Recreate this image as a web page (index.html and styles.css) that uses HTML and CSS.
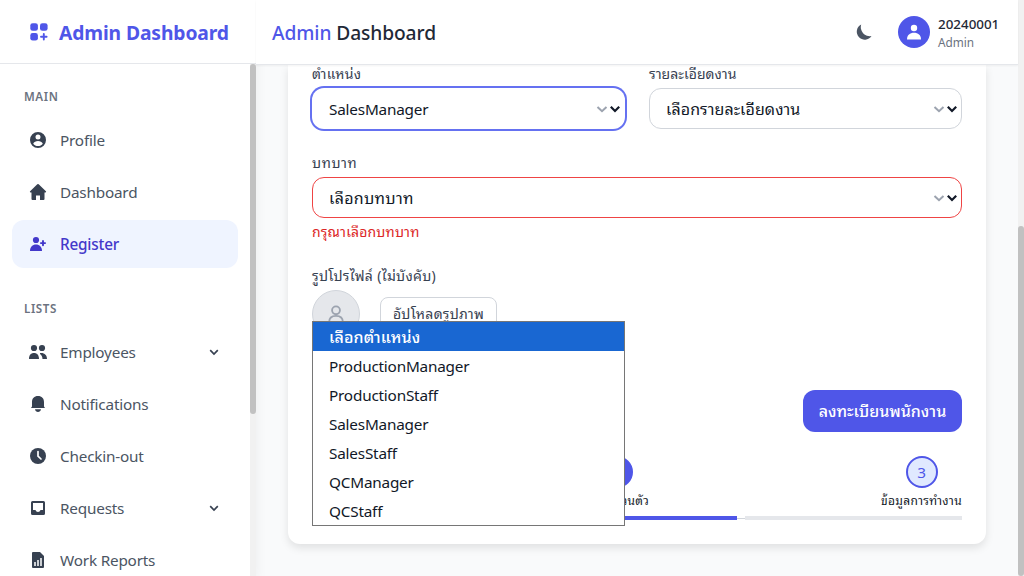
FILE: index.html
```html
<!DOCTYPE html>
<html lang="th">
<head>
<meta charset="utf-8">
<title>Admin Dashboard</title>
<link rel="stylesheet" href="styles.css">
</head>
<body>
<div class="app">
  <aside class="sidebar">
    <div class="brand">
      <svg class="brand-icon" viewBox="0 0 20 20"><rect x="1.300" y="1.200" width="7.600" height="7.600" rx="2.400"/><rect x="11" y="1.200" width="7.600" height="7.600" rx="2.400"/><rect x="1.300" y="11" width="7.600" height="7.600" rx="2.400"/><path d="M14.800 12v5.600M12 14.800h5.600" stroke="currentColor" stroke-width="1.900" stroke-linecap="round"/></svg>
      <span class="brand-name">Admin Dashboard</span>
    </div>
    <div class="side-body">
      <nav class="nav">
        <h3 class="nav-title">MAIN</h3>
        <a class="nav-item"><svg class="icon" viewBox="0 0 20 20"><path fill-rule="evenodd" d="M10 2a8 8 0 1 0 0 16 8 8 0 0 0 0-16zm0 2.600a2.500 2.500 0 1 1 0 5 2.500 2.500 0 0 1 0-5zM5.200 13.700C6 11.900 7.800 11 10 11s4 .9 4.800 2.700C13.600 15.200 12 16 10 16s-3.600-.8-4.800-2.300z"/></svg><span>Profile</span></a>
        <a class="nav-item"><svg class="icon" viewBox="0 0 20 20"><path d="M9.300 2.300a1 1 0 0 1 1.400 0l7.200 7c.5.500.2 1.200-.5 1.200H16.500V17a1 1 0 0 1-1 1H12v-4.500H8V18H4.500a1 1 0 0 1-1-1v-6.500H2.600c-.7 0-1-.7-.5-1.200z"/></svg><span>Dashboard</span></a>
        <a class="nav-item active"><svg class="icon" viewBox="0 0 20 20"><circle cx="8" cy="6" r="3.100"/><path d="M2 17c0-4 2.500-6.500 6-6.500s6 2.500 6 6.500z"/><path d="M15 7v4.200M12.900 9.100h4.200" stroke="currentColor" stroke-width="1.900" stroke-linecap="round"/></svg><span>Register</span></a>
        <h3 class="nav-title second">LISTS</h3>
        <a class="nav-item"><svg class="icon" viewBox="0 0 20 20"><circle cx="6" cy="6" r="3.100"/><circle cx="14" cy="6" r="3.100"/><path d="M1 17c0-4 2-6 5-6s5 2 5 6zM12 11c4.500-.5 7 2 7 6h-4.500c0-2-.8-4-2.500-5z"/></svg><span>Employees</span><svg class="caret" viewBox="0 0 12 12"><path d="M2.200 4.200 6 8l3.800-3.800"/></svg></a>
        <a class="nav-item"><svg class="icon" viewBox="0 0 20 20"><path d="M10 2c3.800 0 6 2.500 6 6v4.500l1 1.500H3l1-1.500V8c0-3.500 2.200-6 6-6zM7 15.300h6c-.3 1.700-1.500 2.700-3 2.700s-2.700-1-3-2.700z"/></svg><span>Notifications</span></a>
        <a class="nav-item"><svg class="icon" viewBox="0 0 20 20"><circle cx="10" cy="10" r="8"/><path d="M10 5.500v4.700l3 2.800" fill="none" stroke="#fff" stroke-width="1.700" stroke-linecap="round"/></svg><span>Checkin-out</span></a>
        <a class="nav-item"><svg class="icon" viewBox="0 0 20 20"><path fill-rule="evenodd" d="M4.500 3h11A1.500 1.500 0 0 1 17 4.500v11a1.500 1.500 0 0 1-1.500 1.500h-11A1.500 1.500 0 0 1 3 15.500v-11A1.500 1.500 0 0 1 4.500 3zM5 5v7h2.500c.4 1.300 1.300 2 2.500 2s2.100-.7 2.500-2H15V5z"/></svg><span>Requests</span><svg class="caret" viewBox="0 0 12 12"><path d="M2.200 4.200 6 8l3.800-3.800"/></svg></a>
        <a class="nav-item"><svg class="icon" viewBox="0 0 20 20"><path d="M5 2h7l4 4v11a1 1 0 0 1-1 1H5a1 1 0 0 1-1-1V3a1 1 0 0 1 1-1z"/><path d="M7 12v4M10 10v6M13 8v8" stroke="#fff" stroke-width="1.500"/></svg><span>Work Reports</span></a>
      </nav>
      <div class="side-scroll"><div class="side-thumb"></div></div>
    </div>
  </aside>

  <div class="main">
    <header class="topbar">
      <h1 class="title"><span class="accent">Admin</span> Dashboard</h1>
      <div class="account">
        <svg class="moon" viewBox="0 0 20 20"><path d="M7.200 2.500a8 8 0 1 0 10.300 11.500A9 9 0 0 1 7.200 2.500z"/></svg>
        <div class="user-badge"><svg viewBox="0 0 20 20"><circle cx="10" cy="6" r="3.200"/><path d="M3 17.500C3 13 6 10.800 10 10.800s7 2.200 7 6.700z"/></svg></div>
        <div class="user"><div class="user-id">20240001</div><div class="user-role">Admin</div></div>
      </div>
    </header>
    <main class="content">
      <section class="card">
        <div class="row">
          <div class="field">
            <label class="label l-pos">ตำแหน่ง</label>
            <div class="select focused"><span>SalesManager</span><svg class="chev" viewBox="0 0 12 12"><path d="M1.500 4 6 8.200 10.500 4"/></svg><svg class="chev dark" viewBox="0 0 12 12"><path d="M1.800 3.800 6 8l4.200-4.200"/></svg></div>
          </div>
          <div class="field">
            <label class="label l-detail">รายละเอียดงาน</label>
            <div class="select"><span class="t-detail">เลือกรายละเอียดงาน</span><svg class="chev" viewBox="0 0 12 12"><path d="M1.500 4 6 8.200 10.500 4"/></svg><svg class="chev dark" viewBox="0 0 12 12"><path d="M1.800 3.800 6 8l4.200-4.200"/></svg></div>
          </div>
        </div>
        <div class="field role">
          <label class="label l-role">บทบาท</label>
          <div class="select invalid"><span class="t-role">เลือกบทบาท</span><svg class="chev" viewBox="0 0 12 12"><path d="M1.500 4 6 8.200 10.500 4"/></svg><svg class="chev dark" viewBox="0 0 12 12"><path d="M1.800 3.800 6 8l4.200-4.200"/></svg></div>
          <p class="error">กรุณาเลือกบทบาท</p>
        </div>
        <div class="field photo">
          <label class="label l-photo">รูปโปรไฟล์ (ไม่บังคับ)</label>
          <div class="upload">
            <div class="photo-circle"><svg viewBox="0 0 24 24"><circle cx="12" cy="8" r="4.300"/><path d="M4.500 21c0-4.500 3-7 7.500-7s7.500 2.500 7.500 7"/></svg></div>
            <button class="upload-btn"><span>อัปโหลดรูปภาพ</span></button>
          </div>
        </div>
        <div class="actions"><button class="submit"><span>ลงทะเบียนพนักงาน</span></button></div>
        <div class="steps">
          <div class="step first"><div class="dot done"></div></div>
          <div class="step"><div class="dot done"></div><div class="step-name">ข้อมูลส่วนตัว</div></div>
          <div class="step"><div class="dot">3</div><div class="step-name">ข้อมูลการทำงาน</div></div>
        </div>
        <div class="progress"><i class="bar on"></i><i class="join"></i><i class="bar on"></i><i class="join"></i><i class="bar last"></i></div>
        <div class="menu">
          <div class="option picked"><span>เลือกตำแหน่ง</span></div>
          <div class="option"><span>ProductionManager</span></div>
          <div class="option"><span>ProductionStaff</span></div>
          <div class="option"><span>SalesManager</span></div>
          <div class="option"><span>SalesStaff</span></div>
          <div class="option"><span>QCManager</span></div>
          <div class="option"><span>QCStaff</span></div>
        </div>
      </section>
    </main>
  </div>
  <div class="page-scroll"><div class="page-thumb"></div></div>
</div>
</body>
</html>
```

FILE: styles.css
```css
* { box-sizing: border-box; }
body { margin: 0; font-family: "Noto Sans", "Noto Sans Thai Looped", "Loma", "Waree", "Noto Sans Thai", "Open Sans", sans-serif; font-size: 16px; color: #111827; overflow: hidden; }
h1, h3, p { margin: 0; }
span, label { white-space: nowrap; }
button { font: inherit; margin: 0; }
svg { display: block; fill: currentColor; flex: none; }
.app { display: flex; height: 576px; width: 1024px; background: #f9fafb; }

.sidebar { width: 256px; flex: none; background: #fff; display: flex; flex-direction: column; box-shadow: 0 4px 12px rgba(0,0,0,.06); }
.brand { height: 64px; flex: none; border-bottom: 1px solid #e5e7eb; display: flex; align-items: center; gap: 10px; padding: 0 0 0 29px; color: #4f56e8; }
.brand-icon { width: 20px; height: 20px; }
.brand-name { font-size: 19.3px; font-weight: 700; letter-spacing: -.12px; line-height: 28px; padding-top: 3px; }
.side-body { flex: 1; min-height: 0; display: flex; }
.nav { flex: 1; padding: 24px 12px 0; overflow: hidden; display: flex; flex-direction: column; gap: 4px; }
.nav-title { font-size: 11.6px; height: 16px; line-height: 18px; font-weight: 600; color: #6b7280; letter-spacing: .6px; padding-left: 12px; margin-bottom: 8px; flex: none; }
.nav-title.second { margin-top: 28px; }
.nav-item { height: 48px; flex: none; display: flex; align-items: center; gap: 12px; padding: 0 18px 0 16px; border-radius: 12px; color: #4b5563; font-size: 15.3px; line-height: 24px; letter-spacing: -.2px; }
.nav-item .icon { width: 20px; height: 20px; color: #374151; }
.nav-item.active { background: #eff4ff; color: #4338ca; font-weight: 500; }
.nav-item.active .icon { color: #4338ca; }
.caret { width: 12px; height: 12px; margin-left: auto; fill: none; stroke: #374151; stroke-width: 1.7; }
.side-scroll { width: 6px; background: #f1f1f1; }
.side-thumb { height: 350px; border-radius: 3px; background: #c1c1c1; }

.main { width: 762px; flex: none; display: flex; flex-direction: column; }
.topbar { height: 65px; flex: none; background: #fff; border-bottom: 1px solid #e5e7eb; box-shadow: 0 1px 2px rgba(0,0,0,.05); display: flex; justify-content: space-between; align-items: center; padding: 0 20px 0 16px; position: relative; z-index: 1; }
.title { font-size: 19.2px; font-weight: 500; line-height: 28px; color: #1f2937; letter-spacing: -.1px; white-space: nowrap; padding-top: 2px; }
.accent { color: #4f56e8; }
.account { display: flex; align-items: center; }
.moon { width: 20px; height: 20px; color: #4b5563; margin-right: 24px; }
.user-badge { width: 32px; height: 32px; border-radius: 50%; background: #4f56e8; color: #fff; display: flex; align-items: center; justify-content: center; margin-right: 8px; }
.user-badge svg { width: 20px; height: 20px; }
.user { width: 60px; }
.user-id { font-size: 13.4px; line-height: 20px; font-weight: 500; color: #1f2937; }
.user-role { font-size: 11.8px; height: 16px; line-height: 17px; color: #6b7280; }

.content { padding: 0 32px; }
.card { height: 479px; background: #fff; border-radius: 0 0 12px 12px; padding: 0 24px; box-shadow: 0 4px 8px rgba(0,0,0,.1); position: relative; }
.row { display: grid; grid-template-columns: 1fr 1fr; gap: 24px; }
.label { display: block; height: 20px; line-height: 20px; font-size: 14px; color: #374151; margin-bottom: 4px; }
.row .label { height: 19px; line-height: 18px; }
.l-pos { letter-spacing: .2px; }
.l-detail { letter-spacing: .05px; }
.l-role { letter-spacing: .6px; }
.l-photo { letter-spacing: .3px; }
.select { height: 41px; border: 1px solid #d1d5db; border-radius: 12px; background: #fff; display: flex; align-items: center; padding: 0 3px 0 16px; font-size: 15.3px; line-height: 24px; letter-spacing: -.2px; }
.select span { margin-right: auto; padding-top: 1px; }
.select .t-detail { font-size: 16px; letter-spacing: .08px; }
.select .t-role { font-size: 16px; letter-spacing: .3px; }
.select.focused { border-color: transparent; box-shadow: 0 0 0 2px #6571f1; }
.select.invalid { border-color: #ef4444; }
.chev { width: 12px; height: 12px; fill: none; stroke: #9ca3af; stroke-width: 2; margin-right: 1px; }
.chev.dark { stroke: #111827; stroke-width: 2.2; margin-right: 0; }
.role { padding-top: 24px; }
.error { font-size: 14px; line-height: 20px; margin-top: 4px; color: #dc2626; white-space: nowrap; letter-spacing: .17px; }
.photo { padding-top: 24px; }
.upload { display: flex; align-items: center; gap: 20px; height: 48px; }
.photo-circle { width: 48px; height: 48px; border-radius: 50%; background: #e5e7eb; border: 1px solid #d1d5db; color: #9ca3af; display: flex; align-items: center; justify-content: center; }
.photo-circle svg { width: 22px; height: 22px; fill: none; stroke: currentColor; stroke-width: 2; }
.upload-btn { width: 117px; height: 34px; border: 1px solid #d1d5db; border-radius: 8px; background: #fff; color: #374151; font-size: 14px; line-height: 20px; padding: 0; letter-spacing: .25px; }
.actions { display: flex; justify-content: flex-end; padding-top: 52px; }
.submit { width: 159px; height: 42px; border: 0; border-radius: 12px; background: #4f56e8; color: #fff; font-weight: 500; padding: 0; line-height: 24px; letter-spacing: 0; }
.steps { display: flex; justify-content: space-between; padding-top: 24px; }
.step { display: flex; flex-direction: column; align-items: center; gap: 4px; }
.step.first { width: 41px; }
.step-name { font-size: 12px; height: 16px; line-height: 18px; white-space: nowrap; color: #111827; letter-spacing: .3px; }
.dot { width: 32px; height: 32px; border-radius: 50%; border: 2px solid #4f56e8; background: #e0e9ff; color: #4f56e8; display: flex; align-items: center; justify-content: center; line-height: 24px; font-size: 15.3px; }
.dot.done { background: #4f56e8; }
.progress { display: flex; align-items: center; margin-top: 8px; height: 4px; }
.bar { height: 4px; flex: 1; background: #e5e7eb; }
.bar.on { background: #4f56e8; }
.bar.last { flex: 0 0 217px; }
.join { width: 8px; height: 1px; background: #d1d5db; }

.menu { position: absolute; left: 24px; top: 256px; width: 313px; height: 205px; border: 1px solid #767676; background: #fff; z-index: 2; }
.option { height: 29px; line-height: 31px; padding-left: 16px; font-size: 15.3px; letter-spacing: -.2px; }
.option.picked { background: #1967d2; color: #fff; font-size: 16px; letter-spacing: .1px; font-weight: 500; }

.page-scroll { width: 6px; flex: none; background: #f1f1f1; padding-top: 226px; }
.page-thumb { height: 350px; border-radius: 3px; background: #c1c1c1; }
```
